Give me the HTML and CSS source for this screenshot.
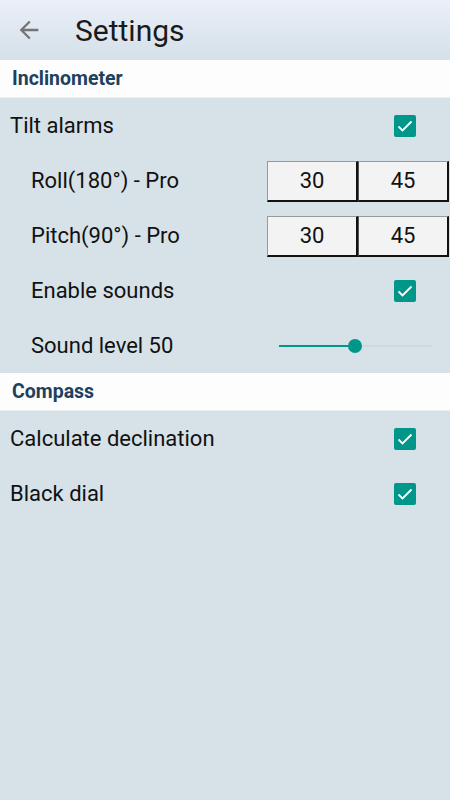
FILE: index.html
```html
<!DOCTYPE html>
<html lang="en">
<head>
  <meta charset="UTF-8" />
  <title>Settings</title>
  <link rel="stylesheet" href="styles.css">
</head>
<body>
  <div class="topbar">
    <svg class="back" width="28" height="28" viewBox="0 0 24 24"><path d="M20 11H7.8l5.6-5.6L12 4l-8 8 8 8 1.4-1.4L7.8 13H20z" fill="#757575"/></svg>
    <span class="title">Settings</span>
  </div>

  <div class="section">Inclinometer</div>

  <div class="row">
    <span class="label">Tilt alarms</span>
    <span class="check"><svg width="18" height="18" viewBox="0 0 18 18"><path d="M2.5 9.5l4 4 9-9" fill="none" stroke="#fff" stroke-width="1.8"/></svg></span>
  </div>
  <div class="row sub">
    <span class="label">Roll(180°) - Pro</span>
    <div class="pair"><span class="box">30</span><span class="box">45</span></div>
  </div>
  <div class="row sub">
    <span class="label">Pitch(90°) - Pro</span>
    <div class="pair"><span class="box">30</span><span class="box">45</span></div>
  </div>
  <div class="row sub">
    <span class="label">Enable sounds</span>
    <span class="check"><svg width="18" height="18" viewBox="0 0 18 18"><path d="M2.5 9.5l4 4 9-9" fill="none" stroke="#fff" stroke-width="1.8"/></svg></span>
  </div>
  <div class="row sub">
    <span class="label">Sound level 50</span>
    <div class="slider">
      <div class="track-on" style="width: 76px"></div>
      <div class="thumb"></div>
      <div class="track-off"></div>
    </div>
  </div>

  <div class="section">Compass</div>

  <div class="row">
    <span class="label">Calculate declination</span>
    <span class="check"><svg width="18" height="18" viewBox="0 0 18 18"><path d="M2.5 9.5l4 4 9-9" fill="none" stroke="#fff" stroke-width="1.8"/></svg></span>
  </div>
  <div class="row">
    <span class="label">Black dial</span>
    <span class="check"><svg width="18" height="18" viewBox="0 0 18 18"><path d="M2.5 9.5l4 4 9-9" fill="none" stroke="#fff" stroke-width="1.8"/></svg></span>
  </div>
</body>
</html>
```

FILE: styles.css
```css
body {
  margin: 0;
  background: #d6e1e8;
  font-family: Roboto, "Noto Sans", sans-serif;
  color: #111;
  height: 800px;
}
.topbar {
  height: 60px;
  display: flex;
  align-items: center;
  background: linear-gradient(#eaeff8, #d5e0e8);
}
.back {
  margin-left: 15px;
}
.title {
  margin-left: 32px;
  font-size: 30px;
  color: #1a1a1a;
}
.section {
  background: #fdfdfd;
  height: 37px;
  line-height: 37px;
  padding-left: 12px;
  font-size: 19.5px;
  font-weight: bold;
  color: #213f5e;
  border-bottom: 1px solid #e8eef2;
}
.row {
  height: 55px;
  display: flex;
  align-items: center;
  justify-content: space-between;
  padding-left: 10px;
}
.row.sub {
  padding-left: 31px;
}
.label {
  font-size: 22px;
}
.check {
  width: 22px;
  height: 22px;
  border-radius: 2px;
  background: #00968a;
  margin-right: 34px;
  display: flex;
  align-items: center;
  justify-content: center;
}
.pair {
  display: flex;
  margin-right: 1px;
}
.box {
  width: 88px;
  height: 38px;
  line-height: 38px;
  text-align: center;
  font-size: 22px;
  background: #f3f3f3;
  border: 1px solid #999;
  border-right: 2px solid #111;
  border-bottom: 2px solid #111;
  margin-top: 1px;
}
.box + .box {
  border-left: 1px solid #555;
}
.slider {
  width: 153px;
  margin-right: 18px;
  display: flex;
  align-items: center;
}
.track-on {
  height: 2px;
  background: #00968a;
}
.thumb {
  width: 14px;
  height: 14px;
  border-radius: 50%;
  background: #00968a;
  margin-left: -7px;
  margin-right: -7px;
  position: relative;
}
.track-off {
  flex: 1;
  height: 2px;
  background: #cdd7de;
}
```
